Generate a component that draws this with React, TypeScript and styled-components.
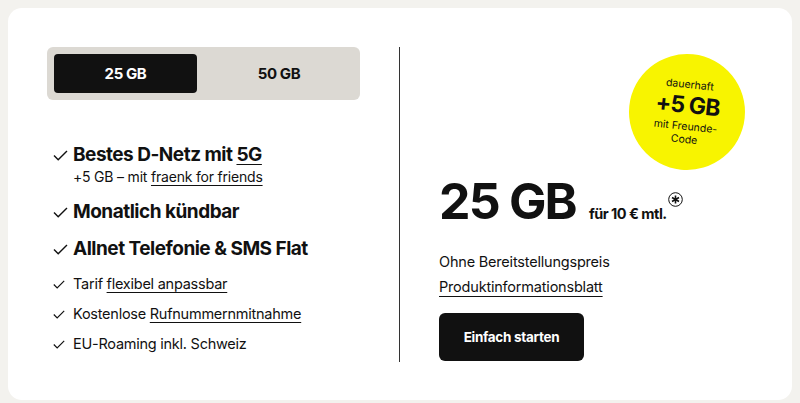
import React from "react";
import styled, { createGlobalStyle } from "styled-components";

const Global = createGlobalStyle`
  html, body { margin: 0; padding: 0; background: #f3f2ee; }
  body { font-family: Inter, "Noto Sans", sans-serif; color: #111; }
`;

const Page = styled.div`
  padding: 8px;
  height: 403px;
  box-sizing: border-box;
`;

const Card = styled.div`
  background: #fff;
  border-radius: 14px;
  height: 392px;
  box-sizing: border-box;
  padding: 39px 0 0 39px;
  display: flex;
`;

const Left = styled.div`
  width: 353px;
  border-right: 1px solid #333;
  height: 315px;
  box-sizing: border-box;
`;

const Tabs = styled.div`
  width: 313px;
  height: 53px;
  background: #dcd9d3;
  border-radius: 6px;
  padding: 7px;
  box-sizing: border-box;
  display: flex;
`;

const Tab = styled.div<{ $active?: boolean }>`
  flex: ${(p) => (p.$active ? "0 0 143px" : "1")};
  display: flex;
  align-items: center;
  justify-content: center;
  padding-left: ${(p) => (p.$active ? 0 : 8)}px;
  border-radius: 4px;
  font-weight: 700;
  font-size: 15px;
  letter-spacing: -0.4px;
  background: ${(p) => (p.$active ? "#111" : "transparent")};
  color: ${(p) => (p.$active ? "#fff" : "#111")};
`;

const List = styled.ul`
  list-style: none;
  margin: 42px 0 0 6px;
  padding: 0;
  display: flex;
  flex-direction: column;
`;

const Item = styled.li<{ $big?: boolean; $gap: number }>`
  display: flex;
  align-items: flex-start;
  margin-top: ${(p) => p.$gap}px;
  font-size: ${(p) => (p.$big ? 19 : 14.5)}px;
  font-weight: ${(p) => (p.$big ? 700 : 400)};
  letter-spacing: ${(p) => (p.$big ? "-0.5px" : "-0.25px")};
  line-height: ${(p) => (p.$big ? 26 : 20)}px;
`;

const Check = styled.span<{ $big?: boolean }>`
  width: 20px;
  flex: none;
  display: flex;
  align-items: center;
  height: ${(p) => (p.$big ? 26 : 20)}px;
  svg { display: block; }
`;

const Sub = styled.div`
  font-size: 14px;
  font-weight: 400;
  letter-spacing: -0.2px;
  line-height: 20px;
  margin-top: -1px;
`;

const U = styled.span`
  text-decoration: underline;
  text-decoration-thickness: 1px;
  text-underline-offset: 3px;
`;

const Right = styled.div`
  flex: 1;
  position: relative;
  padding: 126px 0 0 39px;
`;

const Badge = styled.div`
  position: absolute;
  left: 229px;
  top: 7px;
  width: 116px;
  height: 116px;
  border-radius: 50%;
  background: #f8f400;
  display: flex;
  flex-direction: column;
  align-items: center;
  justify-content: center;
  transform: rotate(6deg);
  text-align: center;
`;

const BadgeSmall = styled.div`
  font-size: 10.5px;
  line-height: 13px;
`;

const BadgeBig = styled.div`
  font-size: 23px;
  font-weight: 700;
  letter-spacing: -0.8px;
  line-height: 27px;
  margin: 1px 0;
`;

const PriceRow = styled.div`
  display: flex;
  align-items: baseline;
`;

const Volume = styled.div`
  font-size: 50px;
  font-weight: 700;
  letter-spacing: -1.8px;
  line-height: 56px;
`;

const Per = styled.div`
  margin-left: 13px;
  font-size: 14.5px;
  font-weight: 700;
  letter-spacing: -0.5px;
  display: flex;
  align-items: flex-start;
`;

const Star = styled.span`
  position: relative;
  top: -13px;
  margin-left: 1px;
  svg { display: block; }
`;

const Info = styled.div`
  margin-top: 23px;
  font-size: 14.5px;
  letter-spacing: -0.2px;
  line-height: 20px;
`;

const InfoLink = styled(Info)`
  margin-top: 5px;
  text-decoration: underline;
  text-decoration-thickness: 1px;
  text-underline-offset: 4px;
`;

const Button = styled.button`
  margin-top: 16px;
  width: 145px;
  height: 48px;
  border: none;
  border-radius: 6px;
  background: #111;
  color: #fff;
  font-family: inherit;
  font-size: 13.5px;
  font-weight: 700;
  letter-spacing: -0.3px;
  display: flex;
  align-items: center;
  justify-content: center;
`;

const Tick = ({ big }: { big?: boolean }) => (
  <svg width={big ? 15 : 12} height={big ? 11 : 9} viewBox="0 0 15 11" fill="none">
    <path d="M1 5.5 L5.2 9.8 L14 1" stroke="#111" strokeWidth={big ? 1.4 : 1.5} />
  </svg>
);

const CircleStar = () => (
  <svg width="15" height="15" viewBox="0 0 15 15" fill="none">
    <circle cx="7.5" cy="7.5" r="6.8" stroke="#111" strokeWidth="1" />
    <path d="M7.5 3.5v8M4 5.5l7 4M11 5.5l-7 4" stroke="#111" strokeWidth="1.6" />
  </svg>
);

export default function App() {
  return (
    <>
      <Global />
      <Page>
        <Card>
          <Left>
            <Tabs>
              <Tab $active>25 GB</Tab>
              <Tab>50 GB</Tab>
            </Tabs>
            <List>
              <Item $big $gap={0}>
                <Check $big><Tick big /></Check>
                <div>
                  Bestes D-Netz mit <U>5G</U>
                  <Sub>+5 GB – mit <U>fraenk for friends</U></Sub>
                </div>
              </Item>
              <Item $big $gap={12}>
                <Check $big><Tick big /></Check>
                <div>Monatlich kündbar</div>
              </Item>
              <Item $big $gap={11}>
                <Check $big><Tick big /></Check>
                <div>Allnet Telefonie &amp; SMS Flat</div>
              </Item>
              <Item $gap={12}>
                <Check><Tick /></Check>
                <div>Tarif <U>flexibel anpassbar</U></div>
              </Item>
              <Item $gap={10}>
                <Check><Tick /></Check>
                <div>Kostenlose <U>Rufnummernmitnahme</U></div>
              </Item>
              <Item $gap={10}>
                <Check><Tick /></Check>
                <div>EU-Roaming inkl. Schweiz</div>
              </Item>
            </List>
          </Left>
          <Right>
            <Badge>
              <BadgeSmall>dauerhaft</BadgeSmall>
              <BadgeBig>+5 GB</BadgeBig>
              <BadgeSmall>mit Freunde-<br />Code</BadgeSmall>
            </Badge>
            <PriceRow>
              <Volume>25 GB</Volume>
              <Per>
                für 10 € mtl.
                <Star><CircleStar /></Star>
              </Per>
            </PriceRow>
            <Info>Ohne Bereitstellungspreis</Info>
            <InfoLink>Produktinformationsblatt</InfoLink>
            <Button>Einfach starten</Button>
          </Right>
        </Card>
      </Page>
    </>
  );
}
